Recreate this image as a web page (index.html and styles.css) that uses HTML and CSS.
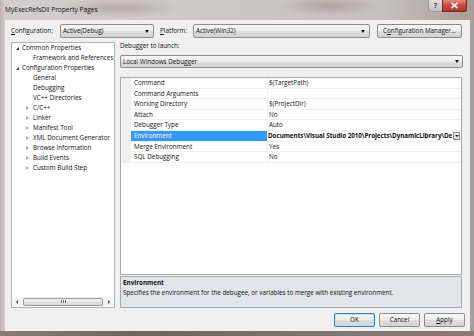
FILE: index.html
```html
<!DOCTYPE html>
<html>
<head>
<meta charset="utf-8">
<link rel="stylesheet" href="styles.css">
</head>
<body>
<div class="win">
  <div class="titlebar">
    <span class="title">MyExecRefsDll Property Pages</span>
    <div class="capbtns">
      <span class="cap-help">?</span>
      <span class="cap-close"><svg width="9" height="7" viewBox="0 0 9 7"><path d="M1.5 0.8 L7.5 6.2 M7.5 0.8 L1.5 6.2" stroke="#fff" stroke-width="1.6" fill="none"/></svg></span>
    </div>
  </div>
  <div class="middle">
    <div class="client">
      <div class="toprow">
        <span class="lbl lbl-config"><u>C</u>onfiguration:</span>
        <div class="combo combo-config"><span class="combo-text">Active(Debug)</span><span class="arrow"></span></div>
        <span class="lbl lbl-platform"><u>P</u>latform:</span>
        <div class="combo combo-platform"><span class="combo-text">Active(Win32)</span><span class="arrow"></span></div>
        <div class="btn btn-cm">C<u>o</u>nfiguration Manager...</div>
      </div>
      <div class="main">
        <div class="tree">
          <div class="tree-list">
            <div class="node lvl0"><span class="exp"></span>Common Properties</div>
            <div class="node lvl1">Framework and References</div>
            <div class="node lvl0"><span class="exp"></span>Configuration Properties</div>
            <div class="node lvl1">General</div>
            <div class="node lvl1 sel">Debugging</div>
            <div class="node lvl1">VC++ Directories</div>
            <div class="node lvl1c"><span class="col"></span>C/C++</div>
            <div class="node lvl1c"><span class="col"></span>Linker</div>
            <div class="node lvl1c"><span class="col"></span>Manifest Tool</div>
            <div class="node lvl1c"><span class="col"></span>XML Document Generator</div>
            <div class="node lvl1c"><span class="col"></span>Browse Information</div>
            <div class="node lvl1c"><span class="col"></span>Build Events</div>
            <div class="node lvl1c"><span class="col"></span>Custom Build Step</div>
          </div>
          <div class="hscroll">
            <span class="sarrow sleft"></span>
            <div class="thumb"><span class="grip"></span></div>
            <span class="sarrow sright"></span>
          </div>
        </div>
        <div class="right">
          <div class="launch-lbl">Debugger to launch:</div>
          <div class="combo combo-debugger"><span class="combo-text">Local Windows Debugger</span><span class="arrow"></span></div>
          <div class="grid">
            <div class="row"><span class="gut"></span><span class="name">Command</span><span class="val">$(TargetPath)</span></div>
            <div class="row"><span class="gut"></span><span class="name">Command Arguments</span><span class="val"></span></div>
            <div class="row"><span class="gut"></span><span class="name">Working Directory</span><span class="val">$(ProjectDir)</span></div>
            <div class="row"><span class="gut"></span><span class="name">Attach</span><span class="val">No</span></div>
            <div class="row"><span class="gut"></span><span class="name">Debugger Type</span><span class="val">Auto</span></div>
            <div class="row selrow"><span class="gut"></span><span class="name">Environment</span><span class="val editval"><span class="edit">Documents\Visual Studio 2010\Projects\DynamicLibrary\De</span><span class="ddbtn"><span class="arrow"></span></span></span></div>
            <div class="row"><span class="gut"></span><span class="name">Merge Environment</span><span class="val">Yes</span></div>
            <div class="row"><span class="gut"></span><span class="name">SQL Debugging</span><span class="val">No</span></div>
          </div>
          <div class="desc">
            <div class="desc-title">Environment</div>
            <div class="desc-text">Specifies the environment for the debugee, or variables to merge with existing environment.</div>
          </div>
        </div>
      </div>
      <div class="buttons">
        <div class="btn btn-ok">OK</div>
        <div class="btn">Cancel</div>
        <div class="btn"><u>A</u>pply</div>
      </div>
    </div>
  </div>
  <div class="bottomframe"></div>
</div>
</body>
</html>
```

FILE: styles.css
```css
* { box-sizing: border-box; }
html, body { margin: 0; padding: 0; }
body {
  font-family: "Open Sans", "Noto Sans", sans-serif;
  font-size: 6.3px;
  color: #111;
  background: #8f807d;
}
.win {
  width: 474px;
  height: 336px;
  display: flex;
  flex-direction: column;
  background:
    radial-gradient(ellipse 60px 10px at 120px 8px, rgba(140,110,100,0.35), transparent),
    radial-gradient(ellipse 50px 10px at 330px 6px, rgba(130,100,90,0.35), transparent),
    linear-gradient(90deg, #bdb3b2 0, #d3cdce 5px, #cec8c9 40%, #c9c1c1 80%, #a99c99 100%);
}
.titlebar {
  height: 20px;
  display: flex;
  align-items: flex-start;
  justify-content: space-between;
}
.title {
  margin: 5px 0 0 5px;
  font-size: 6.6px;
  line-height: 9px;
  color: #111;
}
.capbtns {
  display: flex;
  margin-right: 7px;
}
.cap-help {
  width: 14px;
  height: 12px;
  border: 1px solid rgba(90,80,80,0.45);
  border-right: none;
  border-top: none;
  border-radius: 0 0 0 3px;
  background: linear-gradient(#e4dede, #c8c0c0);
  color: #444;
  font-size: 7px;
  line-height: 11px;
  text-align: center;
  font-weight: bold;
}
.cap-close {
  width: 25px;
  height: 12px;
  border: 1px solid #6d2b28;
  border-top: none;
  border-radius: 0 0 3px 0;
  background: linear-gradient(#e08a80, #c9473c 50%, #b8332a);
  display: flex;
  align-items: center;
  justify-content: center;
}
.middle {
  flex: 1;
  display: flex;
  padding-left: 5px;
}
.client {
  width: 465px;
  height: 311px;
  background: #f0f0f0;
  display: flex;
  flex-direction: column;
}
.bottomframe {
  height: 5px;
  background: linear-gradient(90deg, #8a7c78, #6f625f 30%, #7e716d 60%, #8b7b77);
}
.toprow {
  display: flex;
  align-items: center;
  padding: 4px 0 0 6px;
  height: 18px;
}
.lbl { line-height: 14px; white-space: nowrap; }
.lbl-config { width: 49px; }
.lbl-platform { width: 33px; margin-left: 6px; }
.combo {
  height: 14px;
  border: 1px solid #8e8f8f;
  border-radius: 2px;
  background: linear-gradient(#f6f6f6, #ececec 50%, #dedede 51%, #d3d3d3);
  display: flex;
  align-items: center;
  justify-content: space-between;
  padding: 0 4px 0 2px;
}
.combo-config { width: 94px; }
.combo-platform { width: 177px; }
.combo-text { white-space: nowrap; line-height: 12px; }
.arrow {
  width: 0;
  height: 0;
  border-left: 2.5px solid transparent;
  border-right: 2.5px solid transparent;
  border-top: 3px solid #111;
}
.btn {
  width: 41px;
  height: 14px;
  border: 1px solid #8a8a8a;
  border-radius: 2px;
  background: linear-gradient(#f7f7f7, #ededed 50%, #dfdfdf 51%, #d2d2d2);
  display: flex;
  align-items: center;
  justify-content: center;
  line-height: 12px;
  white-space: nowrap;
}
.btn-cm { width: 85px; margin-left: 7px; }
.main {
  display: flex;
  margin-top: 4px;
  height: 266px;
  padding-left: 6px;
}
.tree {
  width: 104px;
  height: 266px;
  background: #fff;
  border: 1px solid #aeb2b8;
  display: flex;
  flex-direction: column;
}
.tree-list { flex: 1; }
.node {
  height: 10px;
  line-height: 10px;
  white-space: nowrap;
  position: relative;
}
.lvl0 { padding-left: 10px; }
.lvl1 { padding-left: 21px; }
.lvl1c { padding-left: 21px; }
.exp {
  position: absolute;
  left: 4px;
  top: 3.5px;
  width: 0;
  height: 0;
  border-left: 3px solid transparent;
  border-bottom: 3px solid #333;
}
.col {
  position: absolute;
  left: 14px;
  top: 3px;
  width: 0;
  height: 0;
  border-top: 2px solid transparent;
  border-bottom: 2px solid transparent;
  border-left: 3px solid #a8a8a8;
}
.hscroll {
  height: 9px;
  margin: 0 1px 1px 1px;
  display: flex;
  align-items: center;
  background: #f4f4f4;
}
.sarrow { width: 0; height: 0; }
.sleft {
  margin: 0 5px 0 3px;
  border-top: 2px solid transparent;
  border-bottom: 2px solid transparent;
  border-right: 2px solid #444;
}
.sright {
  margin: 0 3px 0 5px;
  border-top: 2px solid transparent;
  border-bottom: 2px solid transparent;
  border-left: 2px solid #444;
}
.thumb {
  flex: 1;
  height: 8px;
  border: 1px solid #9a9a9a;
  border-radius: 2px;
  background: linear-gradient(#f4f4f4, #e4e4e4 50%, #d6d6d6);
  display: flex;
  align-items: center;
  justify-content: center;
}
.grip {
  width: 5px;
  height: 3px;
  background: repeating-linear-gradient(90deg, #666 0 1px, transparent 1px 2px);
}
.right {
  width: 345px;
  margin-left: 4px;
  display: flex;
  flex-direction: column;
}
.launch-lbl {
  height: 9px;
  line-height: 8px;
  padding-left: 1px;
  margin-bottom: 4px;
}
.combo-debugger {
  width: 343px;
  height: 13px;
  margin-left: 1px;
  padding-right: 3px;
}
.grid {
  width: 342px;
  height: 198px;
  margin: 9px 0 0 1px;
  border: 1px solid #a6a9ae;
  background: #fff;
}
.row {
  display: flex;
  height: 10.6px;
  line-height: 10px;
  border-bottom: 1px solid #f0f0f0;
}
.gut { width: 10px; background: #f0f0f0; flex: none; }
.name {
  width: 137px;
  flex: none;
  padding-left: 3px;
  border-right: 1px solid #f0f0f0;
  white-space: nowrap;
}
.val {
  flex: 1;
  padding-left: 1px;
  white-space: nowrap;
  overflow: hidden;
}
.selrow .name { background: #3399ff; color: #fff; border-right-color: #fff; }
.editval { display: flex; align-items: center; justify-content: space-between; padding: 0 1px 0 0; }
.edit { white-space: nowrap; font-weight: bold; letter-spacing: -0.05px; }
.ddbtn {
  width: 7px;
  height: 8px;
  border: 1px solid #888;
  background: linear-gradient(#f6f6f6, #d8d8d8);
  display: flex;
  align-items: center;
  justify-content: center;
  flex: none;
}
.ddbtn .arrow { border-left-width: 2px; border-right-width: 2px; border-top-width: 2px; }
.desc {
  width: 342px;
  height: 32px;
  margin: 1px 0 0 1px;
  border: 1px solid #a6a9ae;
  background: #e2e5ea;
  padding: 1px 2px;
}
.desc-title { font-weight: bold; line-height: 10px; }
.desc-text { line-height: 10px; white-space: nowrap; }
.buttons {
  display: flex;
  justify-content: flex-end;
  gap: 4px;
  margin-top: 5px;
  padding-right: 5px;
}
.btn-ok {
  border-color: #3c7fb1;
  box-shadow: inset 0 0 0 1px #bfe3f8;
}
```
